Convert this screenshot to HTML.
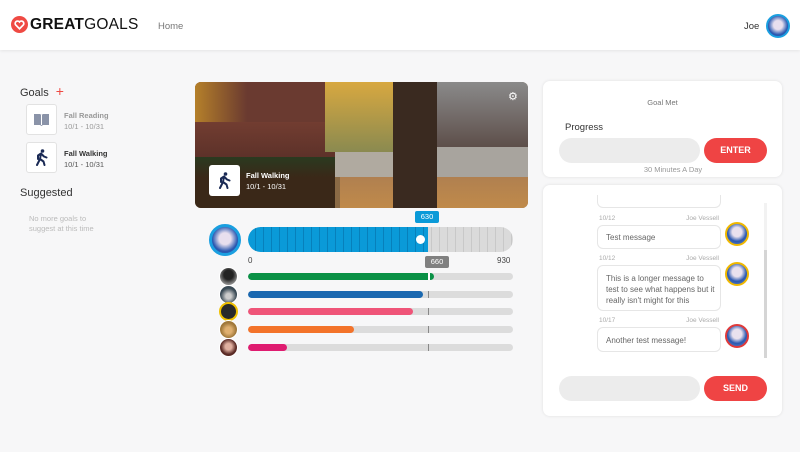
<!DOCTYPE html>
<html><head><style>
*{margin:0;padding:0;box-sizing:border-box}
body{width:800px;height:452px;background:#f7f7f8;font-family:"Liberation Sans",sans-serif;position:relative;overflow:hidden;color:#333}
.a{position:absolute}
.hdr{left:0;top:0;width:800px;height:50px;background:#fff;box-shadow:0 1px 3px rgba(0,0,0,.08)}
.card{background:#fff;border-radius:7px;box-shadow:0 0 3px rgba(0,0,0,.1)}
.tile{width:31px;height:31px;background:#fff;border:1px solid #e2e2e2;border-radius:3px}
.bar{left:248px;width:265px;height:7px;border-radius:4px;background:#dcdcdc;overflow:hidden}
.bar i{position:absolute;left:0;top:0;height:7px;border-radius:4px}
.mk{position:absolute;left:180px;top:0;width:1px;height:7px;background:#888}
.av{width:19px;height:19px;border-radius:50%;left:219px;border:1px solid #fff}
.bub{left:597px;width:124px;background:#fff;border:1px solid #e6e6e6;border-radius:6px;font-size:8px;color:#666;padding:0 8px}
.meta{left:599px;width:120px;font-size:6.5px;color:#aaa}
.meta span{float:right}
.cav{left:725px;width:24px;height:24px;border-radius:50%;background:radial-gradient(circle at 50% 40%,#e9e1ee 30%,#2a58b0 60%,#6b89c8);}
.pill{height:25px;border-radius:13px}
</style></head><body>
<div class="a hdr"></div>
<svg class="a" style="left:11px;top:16px" width="17" height="17" viewBox="0 0 18 18"><circle cx="9" cy="9" r="9" fill="#ef4a43"/><path d="M9 13.5 L5 9.5 A2.3 2.3 0 0 1 9 6.3 A2.3 2.3 0 0 1 13 9.5 Z" fill="none" stroke="#fff" stroke-width="1.8"/></svg>
<div class="a" style="left:30px;top:16px;font-size:15.5px;color:#111;letter-spacing:0.2px"><b>GREAT</b>GOALS</div>
<div class="a" style="left:158px;top:21px;font-size:9.5px;color:#777">Home</div>
<div class="a" style="left:744px;top:21px;font-size:9.5px;color:#333">Joe</div>
<div class="a" style="left:766px;top:14px;width:24px;height:24px;border-radius:50%;border:2px solid #1a9fe0;background:radial-gradient(circle at 50% 45%,#e8dfee 30%,#2a58b0 65%)"></div>

<div class="a" style="left:20px;top:83px;font-size:11px;color:#333">Goals <span style="color:#ef4a43;font-size:14px;margin-left:4px">+</span></div>
<div class="a tile" style="left:26px;top:104px"></div>
<svg class="a" style="left:33px;top:113px" width="17" height="13" viewBox="0 0 17 13"><path d="M1 1h6l1.5 1 1.5-1h6v11h-6l-1.5 1-1.5-1H1z" fill="#8a93a8"/><path d="M8.5 2v10" stroke="#fff"/></svg>
<div class="a" style="left:64px;top:110px;font-size:7.5px;color:#999;line-height:11px"><b>Fall Reading</b><br>10/1 - 10/31</div>
<div class="a tile" style="left:26px;top:142px"></div>
<svg class="a" style="left:35px;top:149px" width="14" height="17" viewBox="0 0 14 17"><circle cx="7.5" cy="2" r="1.8" fill="#1a2a55"/><path d="M6 4.5l-3 2v3.5M6 4.5l3 3 2.5 1M6 4.5L5 10 2 16M5 10l3.5 2.5 1 3.5" stroke="#1a2a55" stroke-width="2" fill="none" stroke-linecap="round" stroke-linejoin="round"/></svg>
<div class="a" style="left:64px;top:148px;font-size:7.5px;color:#555;line-height:11px"><b style="color:#333">Fall Walking</b><br>10/1 - 10/31</div>
<div class="a" style="left:20px;top:187px;font-size:11px;color:#333">Suggested</div>
<div class="a" style="left:29px;top:214px;font-size:7.5px;color:#bbb;line-height:10px">No more goals to<br>suggest at this time</div>

<div class="a" style="left:195px;top:82px;width:333px;height:126px;border-radius:6px;overflow:hidden;background:#8a6a45">
<div class="a" style="left:0;top:0;width:140px;height:80px;background:linear-gradient(180deg,#8a4a3a,#5a3028)"></div>
<div class="a" style="left:0;top:0;width:130px;height:40px;background:linear-gradient(90deg,#b5802a,#6a3a30 40%)"></div>
<div class="a" style="left:130px;top:0;width:90px;height:70px;background:linear-gradient(180deg,#d8a840,#8a8a50)"></div>
<div class="a" style="left:240px;top:0;width:93px;height:70px;background:linear-gradient(180deg,#8a8a8a,#5a4a45)"></div>
<div class="a" style="left:225px;top:65px;width:108px;height:40px;background:#a8a49e"></div>
<div class="a" style="left:140px;top:70px;width:60px;height:25px;background:#b0aaa0"></div>
<div class="a" style="left:145px;top:95px;width:188px;height:31px;background:linear-gradient(180deg,#b08050,#c08a4a)"></div>
<div class="a" style="left:198px;top:0;width:44px;height:126px;background:#3a2a20"></div>
<div class="a" style="left:0;top:75px;width:140px;height:51px;background:linear-gradient(180deg,#2a3a20,#3a2818 40%)"></div>
</div>
<div class="a" style="left:209px;top:165px;width:31px;height:31px;background:#fff;border-radius:3px"></div>
<svg class="a" style="left:218px;top:172px" width="14" height="17" viewBox="0 0 14 17"><circle cx="7.5" cy="2" r="1.8" fill="#1a2a55"/><path d="M6 4.5l-3 2v3.5M6 4.5l3 3 2.5 1M6 4.5L5 10 2 16M5 10l3.5 2.5 1 3.5" stroke="#1a2a55" stroke-width="2" fill="none" stroke-linecap="round" stroke-linejoin="round"/></svg>
<div class="a" style="left:246px;top:170px;font-size:7.5px;color:#fff;line-height:11px"><b>Fall Walking</b><br>10/1 - 10/31</div>
<div class="a" style="left:508px;top:90px;color:#fff;font-size:11px">⚙</div>

<div class="a" style="left:209px;top:224px;width:32px;height:32px;border-radius:50%;border:3px solid #1a9fe0;background:radial-gradient(circle at 50% 45%,#e8dfee 30%,#2a58b0 65%)"></div>
<div class="a" style="left:248px;top:227px;width:265px;height:25px;border-radius:13px;background:repeating-linear-gradient(90deg,#dadada 0 7px,#c8c8c8 7px 8px);overflow:hidden">
<div class="a" style="left:0;top:0;width:180px;height:25px;background:repeating-linear-gradient(90deg,#0a9ad8 0 7px,#0780bb 7px 8px);border-radius:13px 0 0 13px"></div>
<div class="a" style="left:168px;top:8px;width:9px;height:9px;border-radius:50%;background:#fff"></div>
</div>
<div class="a" style="left:415px;top:211px;width:24px;height:12px;background:#0a9ad8;border-radius:2px;color:#fff;font-size:7.5px;text-align:center;line-height:12px">630</div>
<div class="a" style="left:425px;top:256px;width:24px;height:12px;background:#808080;border-radius:2px;color:#fff;font-size:7.5px;text-align:center;line-height:12px">660</div>
<div class="a" style="left:248px;top:256px;font-size:8px;color:#444">0</div>
<div class="a" style="left:497px;top:256px;font-size:8px;color:#444">930</div>

<div class="a av" style="top:267px;background:radial-gradient(circle at 50% 40%,#222 35%,#888 70%)"></div>
<div class="a bar" style="top:273px"><i style="width:186px;background:#0a9146"></i><div class="mk" style="background:#fff;width:2px"></div></div>
<div class="a av" style="top:285px;background:radial-gradient(circle at 50% 60%,#ccc 20%,#3a4a55 60%)"></div>
<div class="a bar" style="top:291px"><i style="width:175px;background:#1a68b0"></i><div class="mk"></div></div>
<div class="a av" style="top:302px;background:#2a2a2a;border:2px solid #f0c000"></div>
<div class="a bar" style="top:308px"><i style="width:165px;background:#ef5478"></i><div class="mk"></div></div>
<div class="a av" style="top:320px;background:radial-gradient(circle at 50% 55%,#e0b070 25%,#a0783a 60%)"></div>
<div class="a bar" style="top:326px"><i style="width:106px;background:#f3732a"></i><div class="mk"></div></div>
<div class="a av" style="top:338px;background:radial-gradient(circle at 50% 45%,#e0b0a0 25%,#5a2a25 60%)"></div>
<div class="a bar" style="top:344px"><i style="width:39px;background:#df1c70"></i><div class="mk"></div></div>

<div class="a card" style="left:543px;top:81px;width:239px;height:96px"></div>
<div class="a" style="left:543px;top:98px;width:239px;text-align:center;font-size:7.5px;color:#777">Goal Met</div>
<div class="a" style="left:565px;top:122px;font-size:9.5px;color:#333">Progress</div>
<div class="a pill" style="left:559px;top:138px;width:141px;background:#ececec"></div>
<div class="a pill" style="left:704px;top:138px;width:63px;background:#ef4444;color:#fff;font-size:9px;font-weight:bold;text-align:center;line-height:25px">ENTER</div>
<div class="a" style="left:543px;top:165px;width:260px;text-align:center;font-size:7.5px;color:#999">30 Minutes A Day</div>

<div class="a card" style="left:543px;top:185px;width:239px;height:231px"></div>
<div class="a" style="left:764px;top:203px;width:3px;height:155px;background:#f2f2f2"></div>
<div class="a" style="left:764px;top:250px;width:3px;height:108px;background:#d5d5d5"></div>
<div class="a bub" style="top:195px;height:13px;border-top:none;border-radius:0 0 6px 6px"></div>
<div class="a meta" style="top:215px">10/12<span>Joe Vessell</span></div>
<div class="a bub" style="top:225px;height:24px;line-height:24px">Test message</div>
<div class="a cav" style="top:222px;border:2px solid #f0b800"></div>
<div class="a meta" style="top:255px">10/12<span>Joe Vessell</span></div>
<div class="a bub" style="top:265px;height:46px;line-height:11px;padding:7px 5px 0 8px">This is a longer message to test to see what happens but it really isn't might for this</div>
<div class="a cav" style="top:262px;border:2px solid #f0b800"></div>
<div class="a meta" style="top:317px">10/17<span>Joe Vessell</span></div>
<div class="a bub" style="top:327px;height:25px;line-height:25px">Another test message!</div>
<div class="a cav" style="top:324px;border:2px solid #e03a3a"></div>
<div class="a pill" style="left:559px;top:376px;width:141px;background:#ececec"></div>
<div class="a pill" style="left:704px;top:376px;width:63px;background:#ef4444;color:#fff;font-size:9px;font-weight:bold;text-align:center;line-height:25px">SEND</div>
</body></html>
